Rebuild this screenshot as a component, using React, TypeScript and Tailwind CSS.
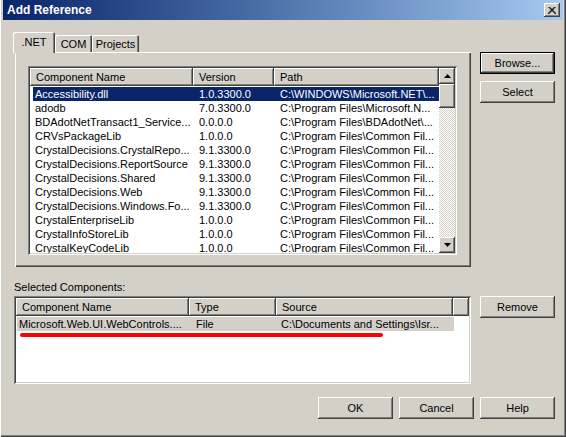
import type { ReactNode } from 'react';

const raised =
  'bg-[#d4d0c8] shadow-[inset_-1px_-1px_0_#404040,inset_1px_1px_0_#ffffff,inset_-2px_-2px_0_#808080]';
const sunken =
  'bg-white p-[2px] shadow-[inset_1px_1px_0_#808080,inset_-1px_-1px_0_#ffffff,inset_2px_2px_0_#404040,inset_-2px_-2px_0_#d4d0c8]';

const rows: [string, string, string][] = [
  ['Accessibility.dll', '1.0.3300.0', 'C:\\WINDOWS\\Microsoft.NET\\...'],
  ['adodb', '7.0.3300.0', 'C:\\Program Files\\Microsoft.N...'],
  ['BDAdotNetTransact1_Service...', '0.0.0.0', 'C:\\Program Files\\BDAdotNet\\...'],
  ['CRVsPackageLib', '1.0.0.0', 'C:\\Program Files\\Common Fil...'],
  ['CrystalDecisions.CrystalRepo...', '9.1.3300.0', 'C:\\Program Files\\Common Fil...'],
  ['CrystalDecisions.ReportSource', '9.1.3300.0', 'C:\\Program Files\\Common Fil...'],
  ['CrystalDecisions.Shared', '9.1.3300.0', 'C:\\Program Files\\Common Fil...'],
  ['CrystalDecisions.Web', '9.1.3300.0', 'C:\\Program Files\\Common Fil...'],
  ['CrystalDecisions.Windows.Fo...', '9.1.3300.0', 'C:\\Program Files\\Common Fil...'],
  ['CrystalEnterpriseLib', '1.0.0.0', 'C:\\Program Files\\Common Fil...'],
  ['CrystalInfoStoreLib', '1.0.0.0', 'C:\\Program Files\\Common Fil...'],
  ['CrystalKeyCodeLib', '1.0.0.0', 'C:\\Program Files\\Common Fil...'],
];

function Button({ children, isDefault }: { children: ReactNode; isDefault?: boolean }) {
  if (isDefault) {
    return (
      <div className="w-[75px] h-[22px] border border-black">
        <div className={`w-full h-full flex items-center justify-center ${raised}`}>{children}</div>
      </div>
    );
  }
  return (
    <div className={`w-[75px] h-[22px] flex items-center justify-center ${raised}`}>{children}</div>
  );
}

function HeaderCell({ w, children }: { w: string; children?: ReactNode }) {
  return (
    <div
      className={`${w} h-[18px] shrink-0 pl-[6px] flex items-center whitespace-nowrap overflow-hidden ${raised}`}
    >
      {children}
    </div>
  );
}

function Arrow({ up }: { up?: boolean }) {
  return (
    <div className={`w-[16px] h-[16px] flex items-center justify-center ${raised}`}>
      <svg width="7" height="4" viewBox="0 0 7 4">
        <path d={up ? 'M3.5 0 L7 4 L0 4 Z' : 'M0 0 L7 0 L3.5 4 Z'} fill="#000" />
      </svg>
    </div>
  );
}

export default function App() {
  return (
    <div className="w-[566px] h-[437px] bg-[#d4d0c8] flex flex-col font-['Liberation_Sans',Arial,sans-serif] text-[11px] leading-[14px] text-black shadow-[inset_1px_0_0_#ffffff,inset_-1px_-1px_0_#404040,inset_-2px_-2px_0_#808080] overflow-hidden">
      {/* title bar */}
      <div className="mx-[3px] h-[20px] bg-linear-to-r from-[#0a246a] to-[#a6caf0] flex items-center justify-between pl-[4px] pr-[3px]">
        <span className="text-white font-bold text-[12px]">Add Reference</span>
        <div className={`w-[16px] h-[14px] flex items-center justify-center ${raised}`}>
          <svg width="8" height="7" viewBox="0 0 8 7">
            <path d="M0.5 0 L7.5 7 M1.5 0 L8.5 7 M7.5 0 L0.5 7 M6.5 0 L-0.5 7" stroke="#000" strokeWidth="1" />
          </svg>
        </div>
      </div>

      <div className="pl-[14px] pt-[12px] flex flex-col">
        {/* top row */}
        <div className="flex gap-[9px]">
          <div className="w-[457px] flex flex-col">
            <div className="h-[20px] flex items-end">
              <div className="relative z-10 -ml-[1px] -mb-[1px] w-[42px] h-[21px] bg-[#d4d0c8] rounded-t-[2px] shadow-[inset_1px_1px_0_#ffffff,inset_-1px_0_0_#404040,inset_-2px_0_0_#808080] flex justify-center pt-[3px]">
                .NET
              </div>
              <div className="w-[37px] h-[17px] bg-[#d4d0c8] rounded-t-[2px] shadow-[inset_1px_1px_0_#ffffff,inset_-1px_0_0_#404040,inset_-2px_0_0_#808080] flex justify-center pt-[2px]">
                COM
              </div>
              <div className="w-[47px] h-[17px] bg-[#d4d0c8] rounded-t-[2px] shadow-[inset_1px_1px_0_#ffffff,inset_-1px_0_0_#404040,inset_-2px_0_0_#808080] flex justify-center pt-[2px]">
                Projects
              </div>
            </div>
            <div className="ml-[1px] w-[456px] h-[215px] shadow-[inset_1px_1px_0_#ffffff,inset_-1px_-1px_0_#404040,inset_-2px_-2px_0_#808080] pl-[13px] pt-[14px]">
              <div className={`w-[429px] h-[189px] ${sunken}`}>
                <div className="flex h-full">
                  <div className="w-[409px] h-full flex flex-col overflow-hidden">
                    <div className="flex">
                      <HeaderCell w="w-[163px]">Component Name</HeaderCell>
                      <HeaderCell w="w-[81px]">Version</HeaderCell>
                      <HeaderCell w="w-[165px]">Path</HeaderCell>
                    </div>
                    <div className="pl-[3px] pt-[1px] flex flex-col">
                      {rows.map((r, i) => (
                        <div
                          key={r[0]}
                          className={`flex h-[14px] items-center whitespace-nowrap ${i === 0 ? 'bg-[#0a246a] text-white' : ''}`}
                        >
                          <div className="w-[160px] shrink-0 pl-[2px] overflow-hidden">{r[0]}</div>
                          <div className="w-[81px] shrink-0 pl-[6px] overflow-hidden">{r[1]}</div>
                          <div className="w-[165px] shrink-0 pl-[6px] overflow-hidden">{r[2]}</div>
                        </div>
                      ))}
                    </div>
                  </div>
                  <div className="w-[16px] h-full flex flex-col bg-[image:repeating-conic-gradient(#d4d0c8_0_25%,#ffffff_0_50%)] bg-[length:2px_2px]">
                    <Arrow up />
                    <div className={`w-[16px] h-[24px] ${raised}`} />
                    <div className="flex-1" />
                    <Arrow />
                  </div>
                </div>
              </div>
            </div>
          </div>
          <div className="pt-[20px] flex flex-col gap-[7px]">
            <Button isDefault>Browse...</Button>
            <Button>Select</Button>
          </div>
        </div>

        <div className="mt-[14px] h-[13px] leading-[13px]">Selected Components:</div>

        {/* selected list */}
        <div className="mt-[2px] flex gap-[9px]">
          <div className={`w-[457px] h-[88px] ${sunken}`}>
            <div className="flex">
              <HeaderCell w="w-[173px]">Component Name</HeaderCell>
              <HeaderCell w="w-[87px]">Type</HeaderCell>
              <HeaderCell w="w-[177px]">Source</HeaderCell>
              <HeaderCell w="w-[16px]" />
            </div>
            <div className="mt-[1px] ml-[1px] w-[437px] h-[14px] bg-[#d4d0c8] flex items-center whitespace-nowrap">
              <div className="w-[172px] shrink-0 pl-[2px] overflow-hidden">Microsoft.Web.UI.WebControls....</div>
              <div className="w-[87px] shrink-0 pl-[7px] overflow-hidden">File</div>
              <div className="w-[177px] shrink-0 pl-[5px] overflow-hidden">C:\Documents and Settings\Isr...</div>
            </div>
            <div className="mt-[2px] ml-[4px] w-[363px] h-[4px] rounded-full bg-[#ff0000]" />
          </div>
          <Button>Remove</Button>
        </div>

        {/* bottom buttons */}
        <div className="mt-[13px] pl-[304px] flex gap-[6px]">
          <Button>OK</Button>
          <Button>Cancel</Button>
          <Button>Help</Button>
        </div>
      </div>
    </div>
  );
}
